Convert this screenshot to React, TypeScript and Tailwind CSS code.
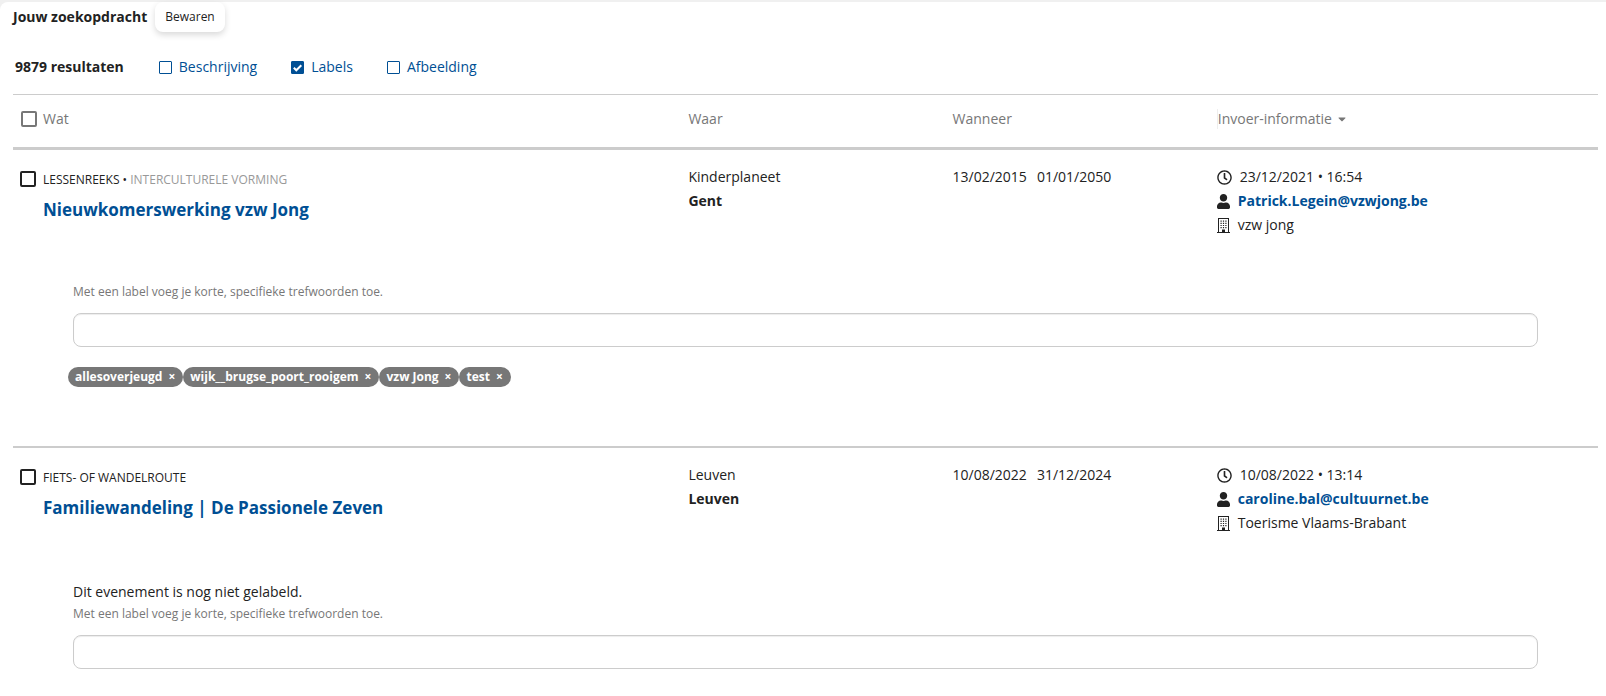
import { FaCaretDown, FaRegClock, FaUser } from 'react-icons/fa';

interface IEvent {
  id: string;
  type: string;
  theme?: string;
  title: string;
  place: string;
  city: string;
  start: string;
  end: string;
  created: string;
  creator: string;
  organizer: string;
  labels: string[];
}

const events: IEvent[] = [
  {
    id: 'nieuwkomerswerking',
    type: 'Lessenreeks',
    theme: 'Interculturele vorming',
    title: 'Nieuwkomerswerking vzw Jong',
    place: 'Kinderplaneet',
    city: 'Gent',
    start: '13/02/2015',
    end: '01/01/2050',
    created: '23/12/2021 • 16:54',
    creator: 'Patrick.Legein@vzwjong.be',
    organizer: 'vzw jong',
    labels: ['allesoverjeugd', 'wijk__brugse_poort_rooigem', 'vzw Jong', 'test'],
  },
  {
    id: 'familiewandeling',
    type: 'Fiets- of wandelroute',
    title: 'Familiewandeling | De Passionele Zeven',
    place: 'Leuven',
    city: 'Leuven',
    start: '10/08/2022',
    end: '31/12/2024',
    created: '10/08/2022 • 13:14',
    creator: 'caroline.bal@cultuurnet.be',
    organizer: 'Toerisme Vlaams-Brabant',
    labels: [],
  },
];

const filters = [
  { id: 'description', label: 'Beschrijving', checked: false },
  { id: 'labels', label: 'Labels', checked: true },
  { id: 'image', label: 'Afbeelding', checked: false },
];

const BuildingIcon: React.FC = () => (
  <svg viewBox="0 0 13 15" className="h-[15px] w-[13px]" aria-hidden="true">
    <path
      fill="currentColor"
      fillRule="evenodd"
      d="M1 0h11v14h1v1H0v-1h1zM2 1v13h3v-2.5h3V14h3V1z"
    />
    <path
      fill="currentColor"
      d="M3.5 2.5h1.2v1.2H3.5zM5.9 2.5h1.2v1.2H5.9zM8.3 2.5h1.2v1.2H8.3zM3.5 4.7h1.2v1.2H3.5zM5.9 4.7h1.2v1.2H5.9zM8.3 4.7h1.2v1.2H8.3zM3.5 6.9h1.2v1.2H3.5zM5.9 6.9h1.2v1.2H5.9zM8.3 6.9h1.2v1.2H8.3zM3.5 9.1h1.2v1.2H3.5zM5.9 9.1h1.2v1.2H5.9zM8.3 9.1h1.2v1.2H8.3z"
    />
  </svg>
);

const FilterCheckbox: React.FC<{ id: string; checked: boolean }> = ({
  id,
  checked,
}) => (
  <span className="grid">
    <input
      id={id}
      type="checkbox"
      defaultChecked={checked}
      className="peer col-start-1 row-start-1 size-[13px] appearance-none rounded-[1px] border border-[#004f94] bg-white checked:bg-[#004f94]"
    />
    <svg
      viewBox="0 0 13 13"
      className="pointer-events-none invisible col-start-1 row-start-1 size-[13px] peer-checked:visible"
      aria-hidden="true"
    >
      <path d="M2.8 6.8l2.5 2.5 5-5" fill="none" stroke="#fff" strokeWidth="2" />
    </svg>
  </span>
);

const EventRows: React.FC<{ event: IEvent }> = ({ event }) => (
  <tbody className="border-b-2 border-[#ccc] last:border-b-0">
    <tr className="align-top">
      <td className="pl-[7px] pt-[15px]">
        <div className="flex gap-[7px]">
          <input
            type="checkbox"
            aria-label={`Selecteer ${event.title}`}
            className="mt-[6px] size-4 shrink-0 appearance-none rounded-[2px] border-2 border-[#222] checked:bg-[#222]"
          />
          <div>
            <p className="pt-[5px] text-[12px] leading-5 uppercase">
              {event.type}
              {event.theme && (
                <>
                  {' • '}
                  <span className="text-[#999]">{event.theme}</span>
                </>
              )}
            </p>
            <a
              href={`#${event.id}`}
              className="block pt-1 text-[17px] leading-8 font-bold text-[#004f94]"
            >
              {event.title}
            </a>
          </div>
        </div>
      </td>
      <td className="pl-[15px] pt-[15px]">
        {event.place}
        <br />
        <strong>{event.city}</strong>
      </td>
      <td className="pl-[15px] pt-[15px]">
        <span className="flex gap-[10px]">
          <span>{event.start}</span>
          <span>{event.end}</span>
        </span>
      </td>
      <td className="pl-[15px] pt-[15px]">
        <div className="flex items-center gap-2">
          <FaRegClock className="size-[15px]" />
          {event.created}
        </div>
        <div className="flex items-center gap-2">
          <FaUser className="h-[15px] w-[13px]" />
          <a href={`mailto:${event.creator}`} className="font-bold text-[#004f94]">
            {event.creator}
          </a>
        </div>
        <div className="flex items-center gap-2">
          <BuildingIcon />
          {event.organizer}
        </div>
      </td>
    </tr>
    <tr>
      <td colSpan={4} className="px-[55px] pt-[45px] pb-[59px]">
        <div className="px-[5px]">
          {event.labels.length === 0 && <p>Dit evenement is nog niet gelabeld.</p>}
          <label
            htmlFor={`labels-${event.id}`}
            className="block text-[12px] leading-5 text-[#777]"
          >
            Met een label voeg je korte, specifieke trefwoorden toe.
          </label>
          <input
            id={`labels-${event.id}`}
            type="text"
            className="mt-[11px] block h-[34px] w-full rounded-lg border border-[#ccc] px-3 shadow-[inset_0_1px_1px_rgba(0,0,0,0.075)]"
          />
        </div>
        {event.labels.length > 0 && (
          <ul className="mt-5 flex flex-wrap">
            {event.labels.map((label) => (
              <li
                key={label}
                className="flex h-5 items-center gap-[6px] rounded-full bg-[#777] pr-2 pl-[7px] text-[12px] font-bold text-white"
              >
                {label}
                <button type="button" aria-label={`Verwijder ${label}`}>
                  ×
                </button>
              </li>
            ))}
          </ul>
        )}
      </td>
    </tr>
  </tbody>
);

const App: React.FC = () => {
  return (
    <div className="min-h-screen bg-[#f0f0f0] pt-[2px] font-['Open_Sans','Noto_Sans',sans-serif] text-[14px] leading-6 text-[#222]">
      <main className="min-h-screen rounded-tl-lg bg-white pr-2 pl-[13px]">
        {/* Search query */}
        <div className="flex items-center gap-2">
          <h1 className="font-bold">Jouw zoekopdracht</h1>
          <button
            type="button"
            className="h-[30px] rounded-lg bg-white px-[10px] text-[12px] shadow-[0_3px_6px_rgba(0,0,0,0.15)]"
          >
            Bewaren
          </button>
        </div>
        {/* Result count and columns to show */}
        <div className="mt-[23px] flex items-center pl-[2px]">
          <p className="mr-[35px] font-bold">9879 resultaten</p>
          <div className="flex gap-[34px] text-[#004f94]">
            {filters.map((filter) => (
              <div key={filter.id} className="flex items-center gap-[7px]">
                <FilterCheckbox id={filter.id} checked={filter.checked} />
                <label htmlFor={filter.id}>{filter.label}</label>
              </div>
            ))}
          </div>
        </div>
        {/* Results */}
        <table className="mt-[15px] w-full table-fixed border-collapse border-t border-[#ccc]">
          <thead className="border-b-3 border-[#ccc] text-left text-[#777]">
            <tr className="h-[54px]">
              <th className="w-5/12 pb-1 pl-2 font-normal">
                <span className="flex items-center gap-[6px]">
                  <input
                    id="select-all"
                    type="checkbox"
                    className="size-4 appearance-none rounded-[2px] border-2 border-[#777] checked:bg-[#777]"
                  />
                  <label htmlFor="select-all">Wat</label>
                </span>
              </th>
              <th className="w-2/12 pb-1 pl-[15px] font-normal">Waar</th>
              <th className="w-2/12 pb-1 pl-[15px] font-normal">Wanneer</th>
              <th className="w-3/12 pb-1 pl-[15px] font-normal">
                <button
                  type="button"
                  aria-haspopup="menu"
                  className="flex h-5 items-center gap-1 border-l border-[#eee]"
                >
                  Invoer-informatie
                  <FaCaretDown className="size-3" />
                </button>
              </th>
            </tr>
          </thead>
          {events.map((event) => (
            <EventRows key={event.id} event={event} />
          ))}
        </table>
      </main>
    </div>
  );
};

export default App;
